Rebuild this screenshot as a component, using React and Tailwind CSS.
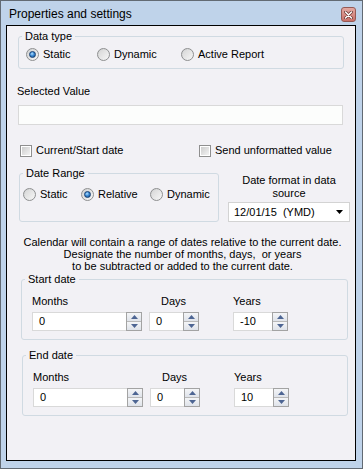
import React from "react";

function Radio({ checked }) {
  return (
    <span className="w-[13px] h-[13px] shrink-0 rounded-full border border-[#8e8f90] bg-[linear-gradient(135deg,#cfd0d1,#f8f8f8)] flex items-center justify-center">
      {checked ? (
        <span className="w-[7px] h-[7px] rounded-full border border-[#163f73] bg-[radial-gradient(circle_at_40%_35%,#b6e2ff_0%,#3b8ad6_45%,#12477f_100%)]" />
      ) : (
        <span className="w-[9px] h-[9px] rounded-full bg-[linear-gradient(135deg,#d8d8d8,#f4f4f4)]" />
      )}
    </span>
  );
}

function RadioItem({ label, checked, width }) {
  return (
    <div className={`flex items-center gap-[4px] ${width}`}>
      <Radio checked={checked} />
      <span className="leading-[13px]">{label}</span>
    </div>
  );
}

function Checkbox({ label }) {
  return (
    <div className="flex items-center gap-[4px]">
      <span className="w-[12px] h-[12px] shrink-0 border border-[#8f8f8f] bg-white p-[1px]">
        <span className="block w-full h-full bg-[linear-gradient(135deg,#cdcdcd,#f3f3f3)]" />
      </span>
      <span className="leading-[13px]">{label}</span>
    </div>
  );
}

function Arrow({ up }) {
  return (
    <svg width="7" height="4" viewBox="0 0 7 4">
      {up ? <path d="M0 4 L3.5 0 L7 4 Z" fill="#4d6593" /> : <path d="M0 0 L7 0 L3.5 4 Z" fill="#4d6593" />}
    </svg>
  );
}

function Spinner({ value }) {
  return (
    <div className="flex h-[19px]">
      <div className="flex-1 bg-white border border-[#d9d9d9] border-r-0 pl-[6px] flex items-center">{value}</div>
      <div className="w-[16px] flex flex-col border border-[#a3a3a3]">
        <div className="flex-1 flex items-center justify-center bg-[linear-gradient(#f4f5f7,#dfe3ea)] border-b border-[#b9b9b9]">
          <Arrow up />
        </div>
        <div className="flex-1 flex items-center justify-center bg-[linear-gradient(#f4f5f7,#dfe3ea)]">
          <Arrow />
        </div>
      </div>
    </div>
  );
}

function DateGroup({ title, years, className }) {
  return (
    <fieldset className={`border border-[#d0dae2] rounded-[3px] px-[3px] pb-[8px] ${className}`}>
      <legend className="px-[3px] leading-[12px]">{title}</legend>
      <div className="mt-[10px] pl-[7px] flex">
        <div className="w-[110px]">
          <div className="leading-[13px]">Months</div>
          <div className="mt-[4px]">
            <Spinner value="0" />
          </div>
        </div>
        <div className="w-[50px] ml-[7px]">
          <div className="leading-[13px] pl-[12px]">Days</div>
          <div className="mt-[4px]">
            <Spinner value="0" />
          </div>
        </div>
        <div className="w-[55px] ml-[34px]">
          <div className="leading-[13px]">Years</div>
          <div className="mt-[4px]">
            <Spinner value={years} />
          </div>
        </div>
      </div>
    </fieldset>
  );
}

export default function App() {
  return (
    <div className="w-[363px] h-[469px] bg-[#bfd3ea] border border-[#626a73] flex flex-col font-['Liberation_Sans',Arial,sans-serif] text-[11px] text-black">
      {/* title bar */}
      <div className="h-[24px] flex items-start shrink-0">
        <div className="pl-[8px] pt-[6px] text-[12px] leading-[15px] flex-1">Properties and settings</div>
        <div className="mt-[6px] mr-[6px] w-[15px] h-[15px] rounded-[3px] border border-[#955a55] bg-[linear-gradient(#e4aaa3,#c86f68)] flex items-center justify-center">
          <svg width="9" height="8" viewBox="0 0 9 8">
            <path d="M1.5 1 L7.5 7 M7.5 1 L1.5 7" stroke="#6e3a36" strokeWidth="3" strokeLinecap="round" />
            <path d="M1.5 1 L7.5 7 M7.5 1 L1.5 7" stroke="#ffffff" strokeWidth="1.5" strokeLinecap="round" />
          </svg>
        </div>
      </div>

      {/* client area */}
      <div className="flex-1 ml-[5px] mr-[6px] mb-[7px] border border-black bg-[#f2f1f5] flex flex-col">
        <fieldset className="mt-[4px] ml-[11px] w-[326px] border border-[#d0dae2] rounded-[3px] px-[3px] pb-[7px]">
          <legend className="px-[3px] leading-[12px]">Data type</legend>
          <div className="mt-[6px] pl-[4px] flex items-center h-[13px]">
            <RadioItem label="Static" checked width="w-[71px]" />
            <RadioItem label="Dynamic" width="w-[84px]" />
            <RadioItem label="Active Report" />
          </div>
        </fieldset>

        <div className="mt-[16px] ml-[10px] leading-[13px]">Selected Value</div>
        <div className="mt-[7px] ml-[11px] w-[325px] h-[20px] bg-[#fcfdfc] border border-[#d9d9d9]" />

        <div className="mt-[19px] flex h-[13px]">
          <div className="ml-[13px] w-[179px]">
            <Checkbox label="Current/Start date" />
          </div>
          <Checkbox label="Send unformatted value" />
        </div>

        <div className="mt-[10px] flex items-start">
          <fieldset className="ml-[12px] w-[200px] border border-[#d0dae2] rounded-[3px] px-[3px] pb-[20px]">
            <legend className="px-[3px] leading-[12px]">Date Range</legend>
            <div className="mt-[9px] flex items-center h-[13px]">
              <RadioItem label="Static" width="w-[58px]" />
              <RadioItem label="Relative" checked width="w-[69px]" />
              <RadioItem label="Dynamic" />
            </div>
          </fieldset>
          <div className="ml-[9px] w-[122px] pt-[7px]">
            <div className="text-center leading-[13px]">Date format in data source</div>
            <div className="mt-[2px] h-[20px] bg-white border border-[#d3d3d3] flex items-center pl-[5px] pr-[6px]">
              <span className="flex-1 whitespace-pre">12/01/15  (YMD)</span>
              <svg width="7" height="4" viewBox="0 0 7 4">
                <path d="M0 0 L7 0 L3.5 4 Z" fill="#000" />
              </svg>
            </div>
          </div>
        </div>

        <div className="mt-[14px] pl-[3px] text-center leading-[12px] whitespace-pre">
          <div>Calendar will contain a range of dates relative to the current date.</div>
          <div>Designate the number of months, days,  or years</div>
          <div>to be subtracted or added to the current date.</div>
        </div>

        <DateGroup title="Start date" years="-10" className="mt-[1px] ml-[14px] w-[327px]" />
        <DateGroup title="End date" years="10" className="mt-[9px] ml-[15px] w-[326px]" />
      </div>
    </div>
  );
}
